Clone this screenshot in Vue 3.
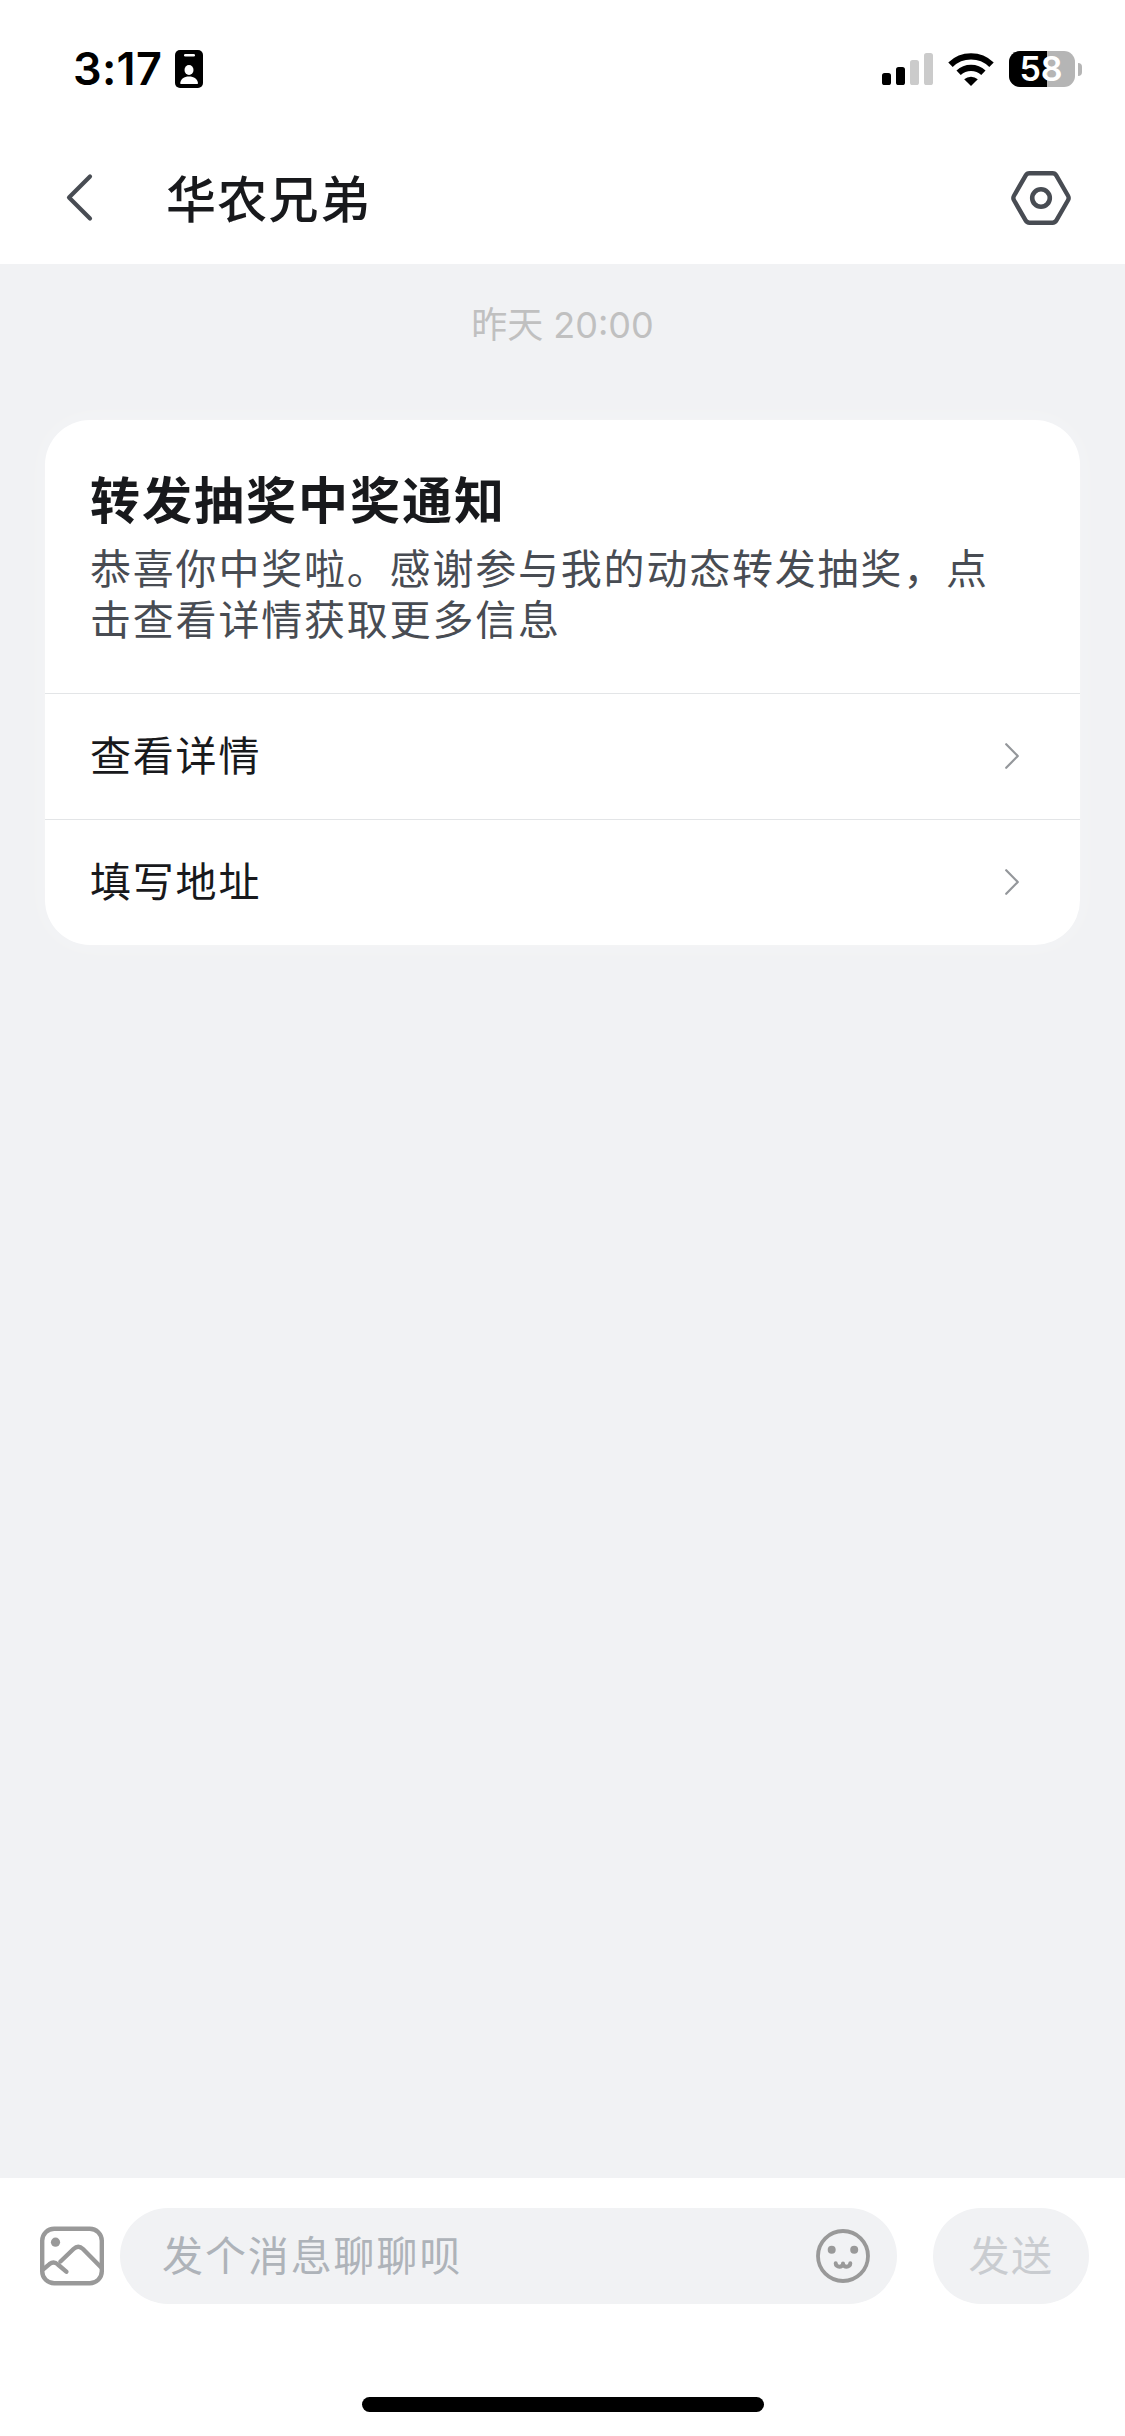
<template>
  <div class="chat-page">
    <!-- Status bar -->
    <div class="status-bar">
      <span class="time">3:17</span>
      <svg class="icon-badge" width="28" height="38" viewBox="0 0 28 38">
        <rect width="28" height="38" rx="5" fill="#000" />
        <rect x="9" y="4" width="11" height="2.6" rx="1.3" fill="#fff" />
        <ellipse cx="14" cy="20" rx="4.5" ry="5" fill="#fff" />
        <path d="M5.2 33.2C5.6 29 9 26.4 14 26.4s8.6 2.6 9 6.8c0 .5-.3.8-.8.8H6c-.5 0-.8-.3-.8-.8z" fill="#fff" />
      </svg>
      <div class="status-right">
        <svg class="icon-signal" width="51" height="32" viewBox="0 0 51 32">
          <rect
            v-for="(bar, i) in signalBars"
            :key="i"
            :x="i * 14"
            :y="32 - bar.height"
            width="9"
            :height="bar.height"
            rx="2.6"
            :fill="bar.on ? '#000' : '#cbcbcb'"
          />
        </svg>
        <svg class="icon-wifi" width="46" height="33" viewBox="0 0 46 33">
          <path d="M2.5 11.7a29.5 29.5 0 0 1 41 0" fill="none" stroke="#000" stroke-width="6.4" />
          <path d="M10.6 19.8a18 18 0 0 1 24.8 0" fill="none" stroke="#000" stroke-width="6.2" />
          <path d="M16.2 26.2a10.5 10.5 0 0 1 13.6 0L23 33z" fill="#000" />
        </svg>
        <div class="battery">
          <div class="battery-body">
            <div class="battery-level" :style="{ width: battery + '%' }"></div>
            <span class="battery-text">{{ battery }}</span>
          </div>
          <div class="battery-cap"></div>
        </div>
      </div>
    </div>

    <!-- Header -->
    <header class="header">
      <svg class="icon-back" width="28" height="50" viewBox="0 0 28 50">
        <path d="M25 3.5L4 24.5l21 21" fill="none" stroke="#484c53" stroke-width="4.2" stroke-linecap="round" stroke-linejoin="round" />
      </svg>
      <h1 class="header-title">华农兄弟</h1>
      <svg class="icon-setting" width="60" height="54" viewBox="0 0 60 54">
        <path
          d="M18.5 2.3h23a4.5 4.5 0 0 1 3.9 2.25l11.6 20.2a4.5 4.5 0 0 1 0 4.5l-11.6 20.2a4.5 4.5 0 0 1-3.9 2.25h-23a4.5 4.5 0 0 1-3.9-2.25L3 29.25a4.5 4.5 0 0 1 0-4.5L14.6 4.55a4.5 4.5 0 0 1 3.9-2.25z"
          fill="none" stroke="#484c53" stroke-width="4.4"
        />
        <circle cx="30" cy="27" r="8.8" fill="none" stroke="#484c53" stroke-width="4.6" />
      </svg>
    </header>

    <!-- Messages -->
    <main class="messages">
      <div class="msg-time">昨天 20:00</div>
      <section class="card">
        <div class="card-main">
          <h2 class="card-title">转发抽奖中奖通知</h2>
          <p class="card-text">恭喜你中奖啦。感谢参与我的动态转发抽奖，点击查看详情获取更多信息</p>
        </div>
        <div v-for="action in actions" :key="action" class="card-action">
          <span>{{ action }}</span>
          <svg width="16" height="28" viewBox="0 0 16 28">
            <path d="M2.2 2.2L13.8 14 2.2 25.8" fill="none" stroke="#94979b" stroke-width="2.2" stroke-linecap="round" stroke-linejoin="round" />
          </svg>
        </div>
      </section>
    </main>

    <!-- Input bar -->
    <footer class="footer">
      <div class="input-bar">
        <svg class="icon-image" width="64" height="60" viewBox="0 0 64 60">
          <g fill="none" stroke="#999" stroke-width="4.4" stroke-linecap="round">
            <rect x="2.2" y="2.7" width="59.6" height="54.6" rx="12" />
            <path d="M3 43.5l6.5-5.4c2.8-2.2 5.6-2.2 8.4.4l8.4 7.2" />
            <path d="M20.5 35.5L33.5 23c3-2.9 6.5-2.9 9.5 0l18 18.3" />
          </g>
          <circle cx="15.5" cy="16.2" r="4.6" fill="#999" />
        </svg>
        <div class="input-box">
          <span class="placeholder">发个消息聊聊呗</span>
          <svg class="icon-emoji" width="54" height="54" viewBox="0 0 54 54">
            <circle cx="27" cy="27" r="25" fill="none" stroke="#999" stroke-width="3.8" />
            <circle cx="15.7" cy="20.8" r="4" fill="#999" />
            <circle cx="38.2" cy="20.8" r="4" fill="#999" />
            <path d="M19.7 34.2c0 4.6 7.3 4.6 7.3.3 0 4.3 7.3 4.3 7.3-.3" fill="none" stroke="#999" stroke-width="4" stroke-linecap="round" stroke-linejoin="round" />
          </svg>
        </div>
        <div class="send-btn">发送</div>
      </div>
      <div class="home-indicator"></div>
    </footer>
  </div>
</template>

<script setup>
import { ref } from 'vue';

const battery = ref(58);

const signalBars = [
  { height: 12, on: true },
  { height: 18, on: true },
  { height: 25, on: false },
  { height: 32, on: false }
];

const actions = ['查看详情', '填写地址'];
</script>

<style>
body {
  margin: 0;
}
</style>

<style scoped>
.chat-page {
  display: flex;
  flex-direction: column;
  width: 1125px;
  height: 2436px;
  background-color: #fff;
  font-family: Inter, "Noto Sans CJK SC", sans-serif;
  overflow: hidden;
}

.chat-page svg {
  display: block;
  flex-shrink: 0;
}

/* Status bar */
.status-bar {
  display: flex;
  align-items: center;
  height: 138px;
  padding: 0 43px 0 73px;
  box-sizing: border-box;
}

.time {
  width: 102px;
  font-size: 45px;
  font-weight: 600;
  line-height: 54px;
  letter-spacing: 0.3px;
  color: #000;
}

.status-right {
  display: flex;
  align-items: center;
  margin-left: auto;
}

.icon-wifi {
  margin-left: 15px;
}

.battery {
  display: flex;
  align-items: center;
  gap: 3px;
  margin-left: 15px;
}

.battery-body {
  position: relative;
  width: 66px;
  height: 36px;
  border-radius: 11px;
  background-color: #b5b5b5;
}

.battery-level {
  height: 100%;
  border-radius: 11px 0 0 11px;
  background-color: #000;
}

/* Percentage sits over the fill */
.battery-text {
  position: absolute;
  inset: 0;
  padding-right: 2px;
  text-align: center;
  font-size: 34px;
  font-weight: 600;
  line-height: 36px;
  color: #fff;
}

.battery-cap {
  width: 4px;
  height: 13px;
  border-radius: 0 5px 5px 0;
  background-color: #b5b5b5;
}

/* Header */
.header {
  display: flex;
  align-items: center;
  height: 126px;
  padding: 0 54px 6px 65px;
  box-sizing: border-box;
}

.header-title {
  margin: 4px auto 0 73px;
  font-size: 50px;
  font-weight: 500;
  line-height: 72px;
  letter-spacing: 1.3px;
  color: #18191c;
}

/* Messages */
.messages {
  flex: 1;
  padding: 0 45px;
  background-color: #f1f2f4;
}

.msg-time {
  padding: 34px 0 68px;
  text-align: center;
  font-size: 36px;
  line-height: 54px;
  color: #c0c0c0;
}

.card {
  border-radius: 45px;
  background-color: #fff;
  box-shadow: 0 0 30px rgba(255, 255, 255, 0.3);
}

.card-main {
  height: 273px;
  padding: 46px 60px 0 45px;
  box-sizing: border-box;
}

.card-title {
  margin: 0;
  font-size: 50px;
  font-weight: 700;
  line-height: 70px;
  letter-spacing: 2px;
  color: #18191c;
}

.card-text {
  margin: 8px 0 0;
  font-size: 41px;
  font-weight: 400;
  line-height: 50.5px;
  letter-spacing: 1.8px;
  color: #484c53;
}

.card-action {
  display: flex;
  align-items: center;
  justify-content: space-between;
  height: 126px;
  padding: 0 60px 2px 45px;
  box-sizing: border-box;
  border-top: 1px solid #e3e5e7;
  font-size: 41px;
  line-height: 60px;
  letter-spacing: 1.8px;
  color: #18191c;
}

/* Input bar */
.footer {
  display: flex;
  flex-direction: column;
  align-items: center;
  justify-content: space-between;
  height: 258px;
  padding: 30px 0 24px;
  box-sizing: border-box;
}

.input-bar {
  display: flex;
  align-items: center;
  width: 100%;
  padding: 0 36px 0 40px;
  box-sizing: border-box;
}

.input-box {
  display: flex;
  flex: 1;
  align-items: center;
  justify-content: space-between;
  height: 96px;
  margin: 0 36px 0 16px;
  padding: 0 27px 0 42px;
  border-radius: 48px;
  background-color: #f1f2f4;
}

.placeholder {
  font-size: 41px;
  line-height: 96px;
  letter-spacing: 1.9px;
  color: #aeb3b9;
}

.send-btn {
  width: 156px;
  border-radius: 48px;
  background-color: #f1f2f4;
  text-align: center;
  font-size: 41px;
  line-height: 96px;
  letter-spacing: 1.5px;
  color: #c9ccd0;
}

.home-indicator {
  width: 402px;
  height: 15px;
  border-radius: 8px;
  background-color: #000;
}
</style>
